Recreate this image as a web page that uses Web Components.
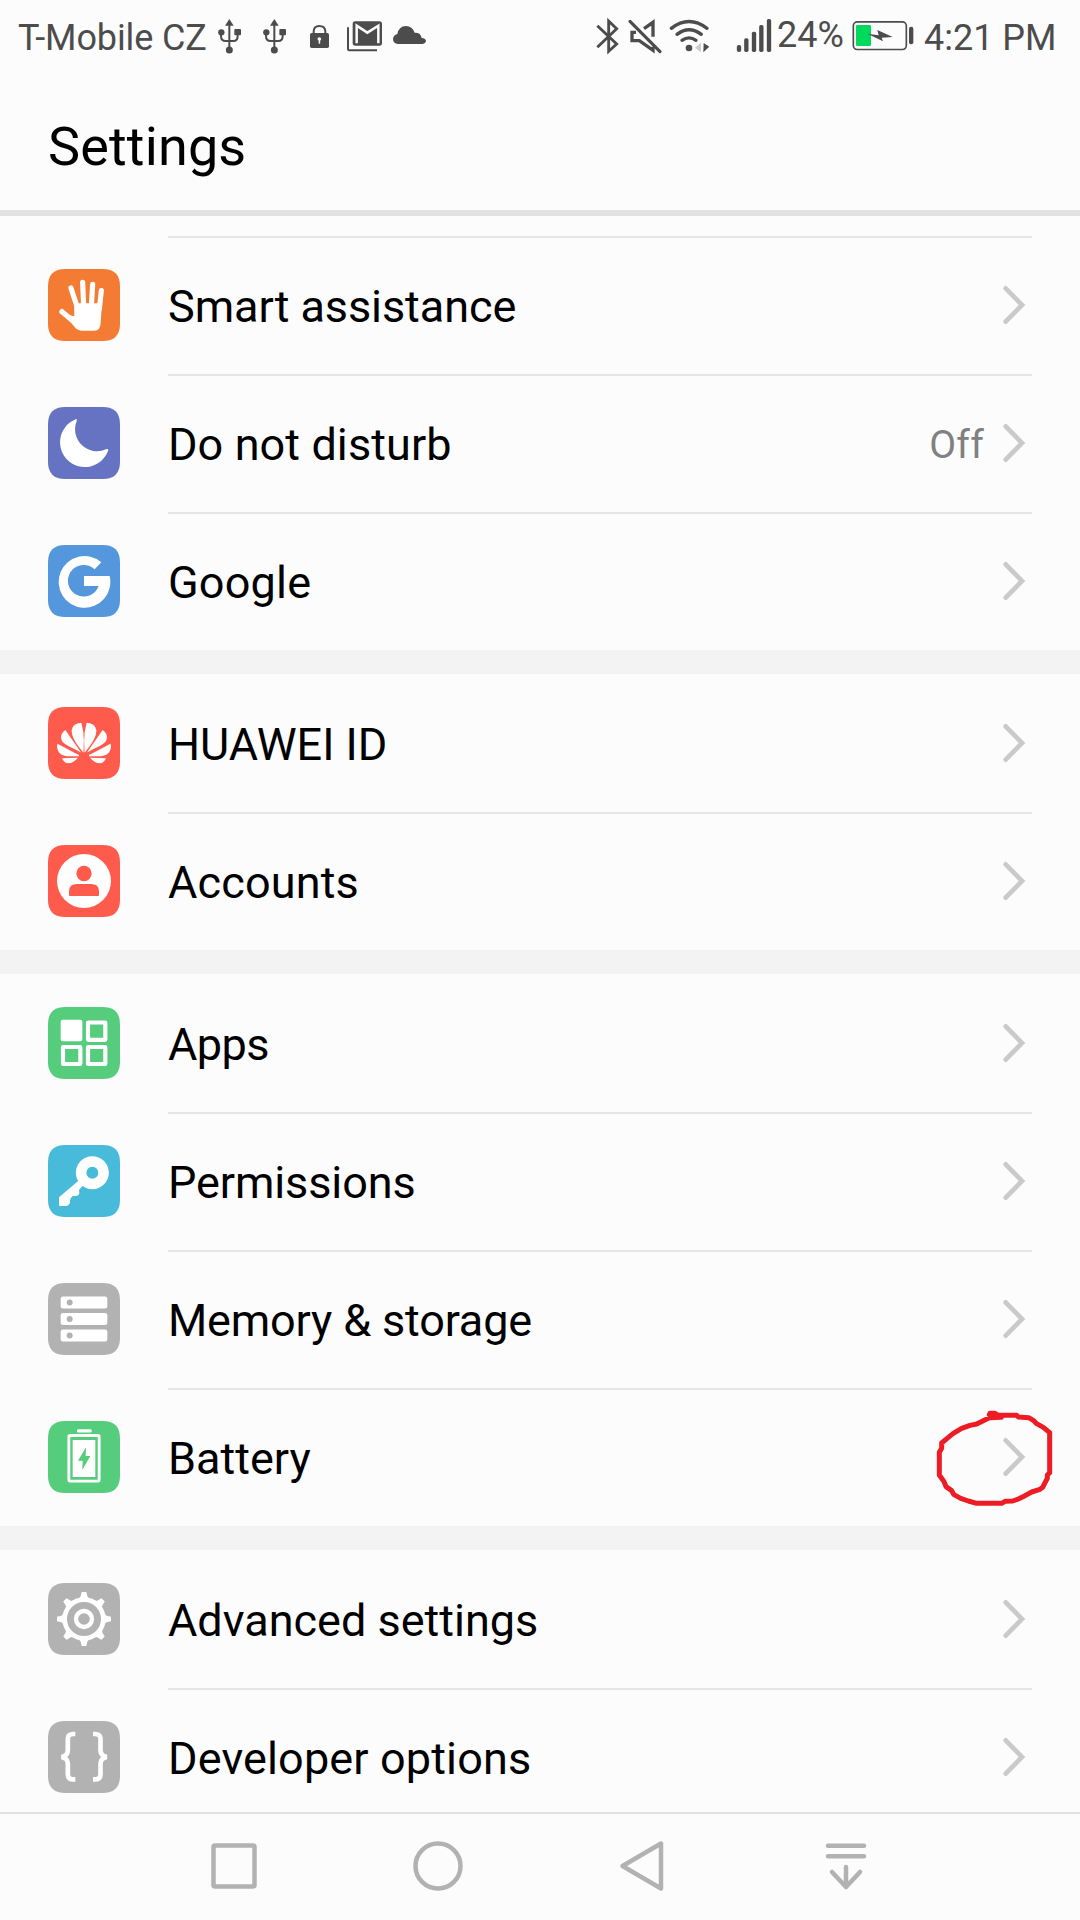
<!DOCTYPE html>
<html lang="en">
<head>
<meta charset="utf-8">
<title>Settings</title>
<style>
html,body{margin:0;padding:0;background:#fcfcfc}
body{width:1080px;height:1920px;overflow:hidden;font-family:Roboto,sans-serif}
</style>
</head>
<body>
<phone-screen>
  <status-bar slot="status" carrier="T-Mobile CZ" battery="24%" time="4:21 PM"></status-bar>
  <title-bar slot="title">Settings</title-bar>
  <settings-group>
    <settings-row icon="hand" color="#f37b33" tracking="-0.08" continued>Smart assistance</settings-row>
    <settings-row icon="moon" color="#6673c2" tracking="0.09" continued value="Off">Do not disturb</settings-row>
    <settings-row icon="google" color="#5597dc" tracking="0.2" continued>Google</settings-row>
  </settings-group>
  <settings-group>
    <settings-row icon="huawei" color="#ff5b4c">HUAWEI ID</settings-row>
    <settings-row icon="account" color="#ff5b4c" tracking="0.15" continued>Accounts</settings-row>
  </settings-group>
  <settings-group>
    <settings-row icon="apps" color="#56cd7d" tracking="-0.55">Apps</settings-row>
    <settings-row icon="key" color="#49bbda" tracking="-0.1" continued>Permissions</settings-row>
    <settings-row icon="storage" color="#b2b2b2" tracking="-0.17" continued>Memory &amp; storage</settings-row>
    <settings-row icon="battery" color="#56cd7d" continued marked>Battery</settings-row>
  </settings-group>
  <settings-group>
    <settings-row icon="gear" color="#b2b2b2">Advanced settings</settings-row>
    <settings-row icon="braces" color="#b2b2b2" tracking="0.14" continued>Developer options</settings-row>
  </settings-group>
  <nav-bar slot="nav"></nav-bar>
</phone-screen>
<script>
const ICONS = {
  hand: `<g fill="none" stroke="#fff" stroke-width="15.5" stroke-linecap="round"><path d="M69 57L87 112M104 40L107 112M134 46L130 112M160 65L154 120"/><path d="M42 128L94 172" stroke-width="16"/></g><path fill="#fff" d="M78 92L85 103H155L162 98L158 162Q157 185 139 185H100Q91 185 83 178L47 134L79 142Z"/>`,
  moon: `<path fill="#fff" d="M80 38Q88 32 86 42A66 66 0 0 0 174 127Q183 124 180 132A74.300 74.300 0 1 1 80 38Z"/>`,
  google: `<path fill="#fff" d="M160 52A77.5 77.5 0 1 0 185 93H108V123H152A47.5 47.5 0 1 1 140 73Z"/>`,
  huawei: `<defs><g id="p" fill="#fff"><path d="M105 136C86 112 71 92 71 70Q73 49 100 47Q108 75 107.500 100L106.500 136Z"/><path d="M97 136C70 118 39 114 39 90Q40 78 52 69Q59 79 98 135Z"/><path d="M93 148H60Q27 146 27 115L29 110Q50 122 93 144Z"/><path d="M90 152L42 154Q48 169 62 169Q76 168 90 152Z"/></g></defs><use href="#p"/><use href="#p" transform="translate(216 0) scale(-1 1)"/>`,
  account: `<circle cx="108" cy="108" r="81" fill="#fff"/><g fill="var(--tile)"><circle cx="108" cy="85.500" r="23"/><path d="M63 151V139Q63 117 87 117H129Q153 117 153 139V151Q153 153 151 153H65Q63 153 63 151Z"/></g>`,
  apps: `<rect x="38" y="38" width="65" height="65" rx="6" fill="#fff"/><g fill="none" stroke="#fff" stroke-width="12.500"><rect x="120" y="46.500" width="52" height="52" rx="1"/><rect x="45" y="120" width="52" height="51" rx="1"/><rect x="120" y="120" width="52" height="51" rx="1"/></g>`,
  key: `<path fill="#fff" fill-rule="evenodd" d="M133 33.500A49.500 49.500 0 1 1 133 132.500A49.500 49.500 0 1 1 133 33.500ZM133 65A18 18 0 1 0 133 101A18 18 0 1 0 133 65Z"/><path fill="#fff" d="M95 104L33 157V180Q33 183 36 183H56Q61 182 66 174V166Q67 158 75 152Q80 154 87 152Q95 149 94 143L93 134L106 121Z"/>`,
  storage: `<g fill="#fff"><rect x="38" y="40.500" width="140" height="36" rx="7"/><rect x="38" y="90" width="140" height="36" rx="7"/><rect x="38" y="139.500" width="140" height="36" rx="7"/></g><g fill="var(--tile)"><circle cx="65" cy="58.500" r="9"/><circle cx="65" cy="108" r="9"/><circle cx="65" cy="157.500" r="9"/></g>`,
  battery: `<rect x="87" y="24.500" width="44" height="10" rx="4" fill="#fff"/><rect x="62.500" y="43.500" width="91" height="137" rx="4" fill="none" stroke="#fff" stroke-width="8.500"/><rect x="74" y="57" width="68" height="111" fill="#fff"/><path fill="var(--tile)" d="M114 79L90 119H104L103 147L127 105H113Z"/>`,
  gear: `<g transform="translate(108 108)"><g fill="none" stroke="#fff"><circle r="58" stroke-width="14"/><circle r="24" stroke-width="13"/></g><g fill="#fff">${[0,45,90,135,180,225,270,315].map(a=>`<path transform="rotate(${a})" d="M-7 -81H7L10 -68Q11 -64 18 -60H-18Q-11 -64 -10 -68Z"/>`).join('')}</g></g>`,
  braces: `<g fill="none" stroke="#fff" stroke-width="14"><path d="M82 39H74Q59.500 40 59.500 54V88Q59 104 41 108Q59 112 59.500 128V160Q60 175 74 175H82"/><path d="M135 39H143Q157.500 40 157.500 54V88Q158 104 176 108Q158 112 157.500 128V160Q157 175 143 175H135"/></g>`
};
const define = (name, html) => customElements.define(name, class extends HTMLElement {
  connectedCallback() {
    if (this.shadowRoot) return;
    this.attachShadow({mode: 'open'}).innerHTML = typeof html === 'function' ? html(this) : html;
  }
});

define('phone-screen', `<style>
:host{display:flex;flex-direction:column;width:1080px;height:1920px;background:#fcfcfc;overflow:hidden}
main{flex:1;min-height:0;overflow:hidden;padding-top:20px;box-sizing:border-box;display:flex;flex-direction:column}
</style><slot name="status"></slot><slot name="title"></slot><main><slot></slot></main><slot name="nav"></slot>`);

const usb = `<svg width="45" height="80" viewBox="630 0 135 240"><g fill="none" stroke="#4c4c4c" stroke-width="6"><path d="M688 70V150M663 98V108Q663 123 677 123H700Q713 123 713 108V98"/></g><path d="M688 57L701 77H675Z"/><circle cx="688" cy="150" r="10.500"/><circle cx="664" cy="97" r="9.500"/><rect x="703" y="87" width="20" height="19" rx="3"/></svg>`;
define('status-bar', el => `<style>
:host{display:flex;height:83px;color:#4c4c4c;font-size:36px;line-height:77px;white-space:nowrap}
svg{display:block;flex:none;fill:#4c4c4c}
.left{display:flex;width:577px;padding-left:18px;flex:none}
.right{display:flex}
.carrier{width:192px;letter-spacing:-0.13px}
.pct{width:74px;line-height:71px}
.time{padding-left:3px}
.ln{fill:none;stroke:#4c4c4c}
</style>
<div class="left"><span class="carrier">${el.getAttribute('carrier')}</span>${usb}${usb}
<svg width="45" height="80" viewBox="900 0 135 240"><path class="ln" stroke-width="6" d="M941 101V94Q942 78 958 78Q975 78 976 94V101"/><rect x="930" y="99" width="57" height="45" rx="5"/><circle cx="958" cy="117" r="5.500" fill="#fcfcfc"/><rect x="956" y="118" width="4.500" height="13" fill="#fcfcfc"/></svg>
<svg width="45" height="80" viewBox="1035 0 135 240"><path class="ln" stroke-width="6" d="M1044 82V147Q1044 151 1048 151H1131"/><rect x="1058" y="64" width="88" height="73" rx="8"/><path d="M1070 130V77L1102 98L1135 77V130" fill="none" stroke="#fcfcfc" stroke-width="7.500"/></svg>
<svg width="40" height="80" viewBox="1170 0 120 240"><path d="M1194 132Q1179 130 1179 117Q1180 105 1192 102Q1196 79 1218 78Q1237 79 1244 98Q1262 97 1265 114Q1278 115 1278 124Q1277 131 1268 132Z"/></svg></div>
<div class="right">
<svg width="32" height="80" viewBox="45 0 96 240"><path class="ln" stroke-width="8.500" d="M52 77L110 132L86 154V63L110 86L52 142"/></svg>
<svg width="41" height="80" viewBox="141 0 123 240"><g class="ln" stroke-width="10"><path stroke-width="9.500" stroke-linecap="round" d="M150 64L240 155"/><path d="M192 86L219 67V110M168 97H156V122H178L219 151V140"/></g></svg>
<svg width="67" height="80" viewBox="264 0 201 240"><g class="ln" stroke-width="10" stroke-linecap="round"><path d="M274 85Q327 44 381 85M291 103Q327 75 364 103M306 121Q327 106 348 121"/></g><circle cx="327" cy="144" r="10"/><path fill="#cecece" d="M345 143L363 128V157Z"/><path d="M371 129L388 140L370 157Z"/></svg>
<svg width="42" height="80" viewBox="465 0 126 240"><g><rect x="470.500" y="135" width="13" height="21" rx="6"/><rect x="492.500" y="115" width="13" height="41" rx="5"/><rect x="515.500" y="95" width="13" height="61" rx="5"/><rect x="537.500" y="75" width="13" height="81" rx="5"/><rect x="560.500" y="57" width="13" height="99" rx="5"/></g></svg>
<span class="pct">${el.getAttribute('battery')}</span>
<svg width="70" height="80" viewBox="813 0 210 240"><rect class="ln" stroke-width="5" x="820" y="65.500" width="159" height="83" rx="12"/><rect x="828" y="75" width="45" height="63" rx="4" fill="#00d95b"/><path d="M862 101L896 106L892 90L938 111L905 113L909 124Z"/><rect x="987" y="80" width="13" height="53" rx="6"/></svg>
<span class="time">${el.getAttribute('time')}</span></div>`);

define('title-bar', `<style>
:host{display:flex;align-items:center;height:133px;box-sizing:border-box;padding-left:48px;border-bottom:6px solid #e1e1e1;font-size:54px;letter-spacing:.15px;color:#000}
</style><slot></slot>`);

define('settings-group', `<style>
:host{display:block;flex:none;border-bottom:24px solid #f3f3f3}
</style><slot></slot>`);

define('settings-row', el => `<style>
:host{display:flex;align-items:center;gap:48px;height:138px;padding:0 48px;--tile:${el.getAttribute('color')};position:relative}
.tile{display:block;flex:none;width:72px;height:72px}
.body{flex:1;display:flex;align-items:center;height:138px}
:host([continued]) .body{box-shadow:inset 0 2px #e5e5e5}
.label{flex:1;font-size:45px;color:#000;padding-top:3px;white-space:nowrap;letter-spacing:${el.getAttribute('tracking') || 0}px}
.value{font-size:39px;color:#808080;padding:3px 18px 0 0;letter-spacing:.3px}
.chev{display:block;margin-right:6px}
.mark{position:absolute;left:930px;top:18px}
</style>
<svg class="tile" viewBox="0 0 216 216"><path fill="var(--tile)" d="M52 0H164Q216 0 216 52V164Q216 216 164 216H52Q0 216 0 164V52Q0 0 52 0Z"/>${ICONS[el.getAttribute('icon')]}</svg>
<div class="body"><span class="label"><slot></slot></span>${el.hasAttribute('value') ? `<span class="value">${el.getAttribute('value')}</span>` : ''}
<svg class="chev" width="24" height="44" viewBox="0 0 72 132"><path fill="none" stroke="#cacaca" stroke-width="14" stroke-linecap="round" d="M11 16L60 66L11 116"/></svg></div>
${el.hasAttribute('marked') ? `<svg class="mark" width="130" height="110" viewBox="90 108 390 330"><path fill="none" stroke="#ed1c24" stroke-width="15" stroke-linejoin="round" stroke-linecap="round" d="M304 142L268 143L230 162L210 166L185 175L160 190L145 202L125 219V235L118 247V315L132 335L138 350L155 362L162 374L182 385L205 393L230 400H305L315 394L338 393L355 387L375 377L395 366L420 358L428 352L434 340L442 325V315L449 308V188L430 172L410 161L400 151L386 143L355 141L350 136H295L285 130H270L268 134L300 142"/></svg>` : ''}`);

define('nav-bar', `<style>
:host{display:flex;flex:none;box-sizing:border-box;height:108px;border-top:2px solid #e1e1e1;padding:0 132px 2px;align-items:center}
div{width:204px;display:flex;justify-content:center}
svg{display:block;fill:none;stroke:#b2b2b2;stroke-width:4.500;stroke-linejoin:round;stroke-linecap:round}
</style>
<div><svg width="60" height="60"><rect x="9.500" y="9.500" width="41" height="41" rx="1.500"/></svg></div>
<div><svg width="60" height="60"><circle cx="30" cy="30" r="22.500"/></svg></div>
<div><svg width="60" height="60"><path d="M10.500 30L49 7.500V52.500Z"/></svg></div>
<div><svg width="60" height="60"><path d="M12 9.700H48M12 20.300H48M30 31V51M16 36L30 51L44 36"/></svg></div>`);
</script>
</body>
</html>
